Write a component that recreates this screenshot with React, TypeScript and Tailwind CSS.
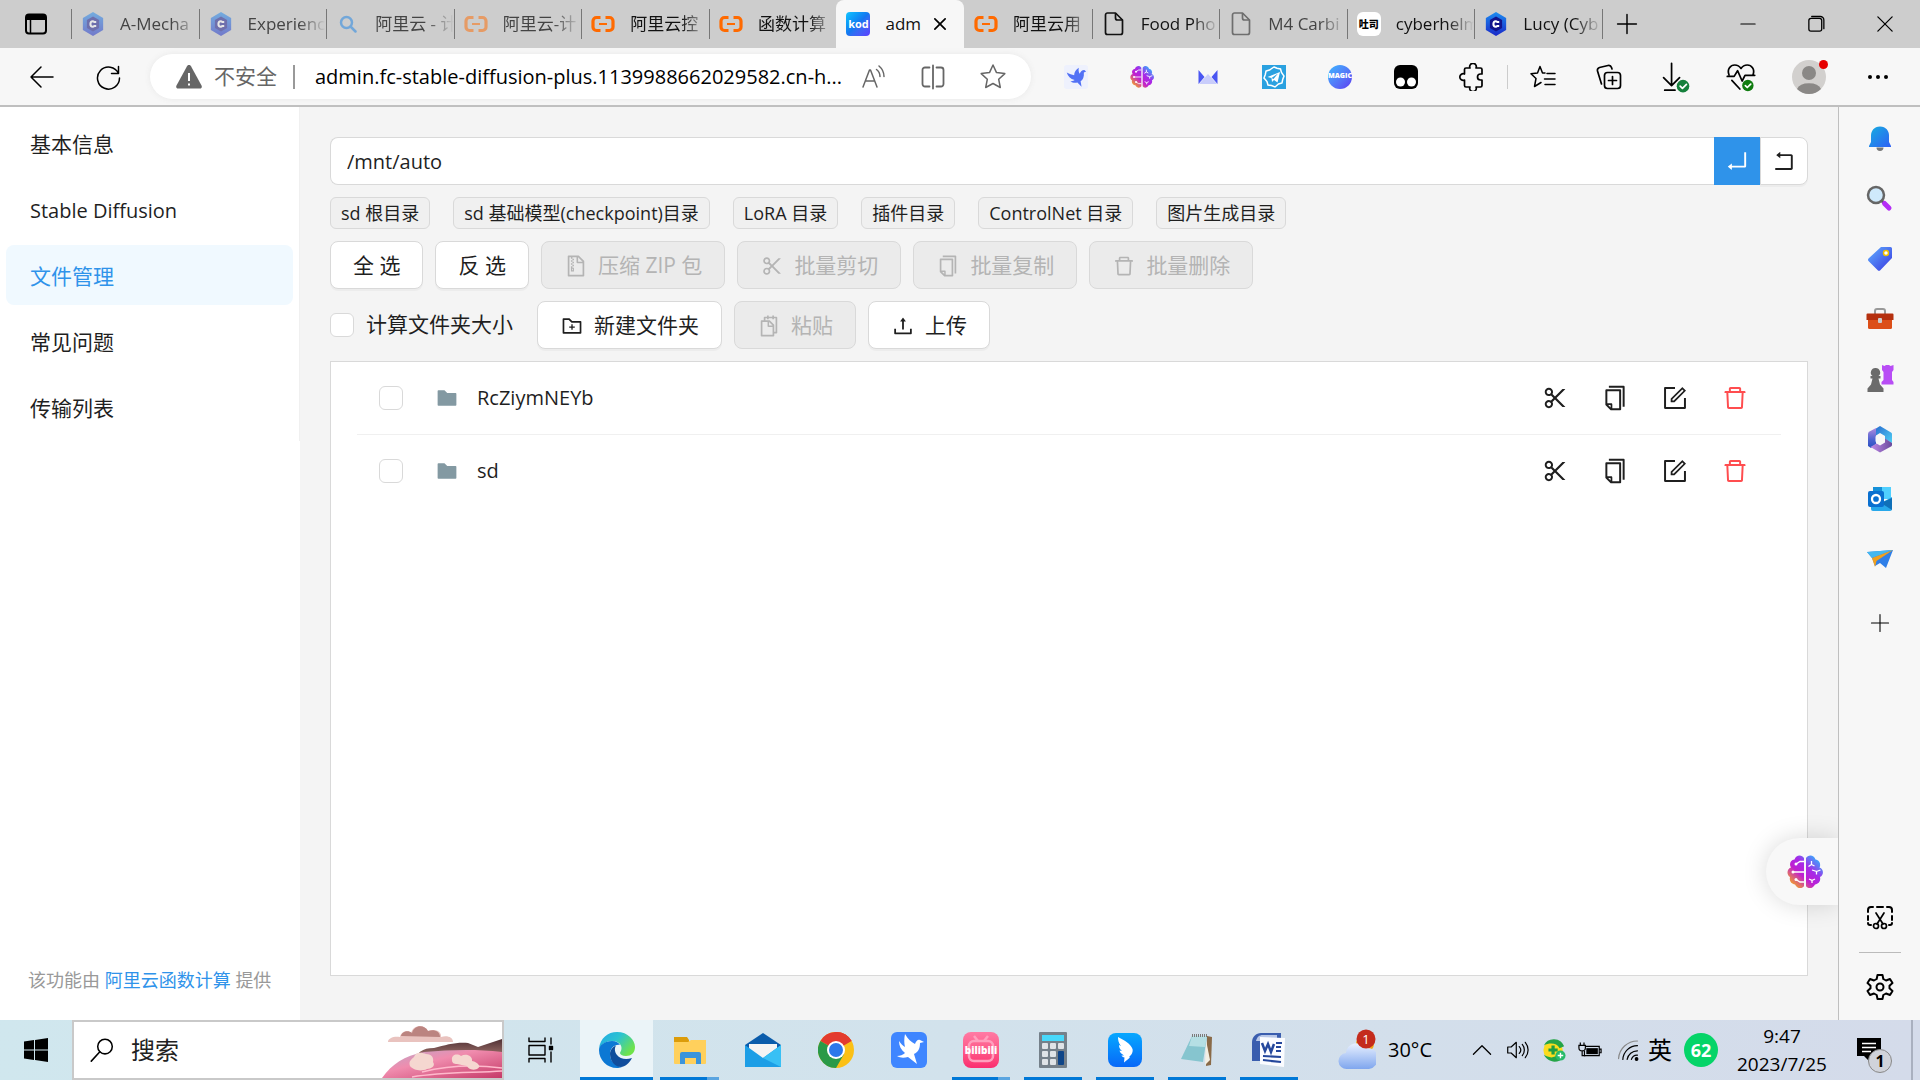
import { useState } from 'react'
import type { ReactNode } from 'react'
import {
  AiFillFolder,
  AiOutlineCopy,
  AiOutlineDelete,
  AiOutlineEnter,
  AiOutlineFileZip,
  AiOutlineFolderAdd,
  AiOutlineForm,
  AiOutlineRollback,
  AiOutlineScissor,
  AiOutlineSnippets,
  AiOutlineUpload,
} from 'react-icons/ai'

type IconProps = { className?: string }

/* ---------- tab icons ---------- */

function CivitIcon({ className }: IconProps) {
  return (
    <svg viewBox="0 0 24 26" className={className}>
      <defs>
        <linearGradient id="civit" x1="0" y1="0" x2="0" y2="1">
          <stop offset="0" stopColor="#1c8cf0" />
          <stop offset="1" stopColor="#1a28c8" />
        </linearGradient>
      </defs>
      <path d="M12 0l11 6.4v13.2L12 26 1 19.600V6.400z" fill="url(#civit)" />
      <path d="M12 5l6.600 3.800v8.400L12 21l-6.600-3.800V8.800z" fill="#12148c" />
      <path d="M15.500 10.800h-2.200c-.5-.6-1-.8-1.600-.8-1.600 0-2.500 1.200-2.500 3s.9 3 2.500 3c.7 0 1.200-.3 1.600-.9h2.200" fill="none" stroke="#fff" strokeWidth="2.200" />
    </svg>
  )
}

function AliyunIcon({ className }: IconProps) {
  return (
    <svg viewBox="0 0 24 24" className={className} fill="none" stroke="#ff6a00" strokeWidth="3.200">
      <path d="M9.500 5.500H5.500a3.500 3.500 0 0 0-3.500 3.500v6a3.500 3.500 0 0 0 3.500 3.500h4M14.500 5.500h4A3.500 3.500 0 0 1 22 9v6a3.500 3.500 0 0 1-3.500 3.500h-4" />
      <path d="M8 12h8" strokeWidth="2" />
    </svg>
  )
}

function SearchTabIcon({ className }: IconProps) {
  return (
    <svg viewBox="0 0 24 24" className={className} fill="none" stroke="#1a82e6" strokeWidth="2.500" strokeLinecap="round">
      <circle cx="10.500" cy="10.500" r="5.500" />
      <path d="M15 15l4.500 4.500" />
    </svg>
  )
}

function PageIcon({ className }: IconProps) {
  return (
    <svg viewBox="0 0 24 24" className={className} fill="none" stroke="#111" strokeWidth="1.700" strokeLinejoin="round">
      <path d="M5.500 1h8L20.500 8v12.500a2 2 0 0 1-2 2h-13a2 2 0 0 1-2-2V3a2 2 0 0 1 2-2z" />
      <path d="M13.500 1v5a2 2 0 0 0 2 2h5" />
    </svg>
  )
}

function KodIcon() {
  return (
    <span className="flex size-6 items-center justify-center rounded-sm bg-linear-to-br from-[#18c5ff] via-[#1676f0] to-[#5a3cff] text-[11px] font-bold text-white">
      kod
    </span>
  )
}

function TusiIcon() {
  return (
    <span className="flex size-6 items-center justify-center rounded-md bg-white text-[10px] font-black text-black">
      吐司
    </span>
  )
}

/* ---------- line icons of the browser frame ---------- */

function Line({ className = 'size-7', width = '1.5', children }: { className?: string; width?: string; children: ReactNode }) {
  return (
    <svg viewBox="0 0 28 28" className={className} fill="none" stroke="currentColor" strokeWidth={width} strokeLinecap="round" strokeLinejoin="round">
      {children}
    </svg>
  )
}

const WorkspaceIcon = () => (
  <Line width="2">
    <rect x="4" y="4.500" width="20" height="19" rx="3" />
    <path d="M4 7.500h20" strokeWidth="5" strokeLinecap="butt" />
    <path d="M8.500 9v14" strokeWidth="1.500" />
  </Line>
)
const BackIcon = () => (
  <Line>
    <path d="M13 4L3 14l10 10M3 14h22" />
  </Line>
)
const RefreshIcon = () => (
  <Line>
    <path d="M24.500 10.500A11 11 0 1 0 25.500 15M24.500 3.500v7h-7" />
  </Line>
)
const ReadAloudIcon = () => (
  <Line>
    <path d="M4 24l6.500-17h1L18 24M6.500 18h9M17.500 6.500a9 9 0 0 1 3.500 7M20 3a14 14 0 0 1 5 10.500" />
  </Line>
)
const SplitIcon = () => (
  <Line width="1.800">
    <path d="M10.500 4.500H6A2.500 2.500 0 0 0 3.500 7v14A2.500 2.500 0 0 0 6 23.500h4.500M17.500 4.500H22A2.500 2.500 0 0 1 24.500 7v14a2.500 2.500 0 0 1-2.500 2.500h-4.500M14 2.500v23" />
  </Line>
)
const StarIcon = () => (
  <Line>
    <path d="M14 2l3.500 7.600 8.300 1-6.100 5.700 1.600 8.200L14 20.500l-7.300 4 1.600-8.200-6.100-5.700 8.300-1z" />
  </Line>
)
const PuzzleIcon = () => (
  <Line width="1.700">
    <path d="M8 5h4a3.300 3.300 0 1 1 6 0h4.500A1.500 1.500 0 0 1 24 6.500V11h-1.500a3 3 0 1 0 0 6H24v5.500a1.500 1.500 0 0 1-1.500 1.500H18a3.300 3.300 0 1 1-6 0H8a1.500 1.500 0 0 1-1.500-1.500V17a3.300 3.300 0 1 1 0-6V6.500A1.500 1.500 0 0 1 8 5z" />
  </Line>
)
const FavoritesIcon = () => (
  <Line>
    <path d="M16 10h-2.500L11 3.500 8.500 10l-6.500.8 5 4.700L5.500 23.500 12 19.500M18 10.500h8M15.500 16H26M16 21.500h10" />
  </Line>
)
const CollectionsIcon = () => (
  <Line width="1.700">
    <rect x="9.500" y="9.500" width="16" height="16" rx="3" />
    <path d="M17.500 13.500v8M13.500 17.500h8M6.500 21L2.500 8a3 3 0 0 1 2-3.500L13 2.500a3 3 0 0 1 3.500 2l.5 1.500" />
  </Line>
)
const DownloadIcon = () => (
  <Line className="size-8">
    <path d="M11 2v19M4 14.500l7 7 7-7M5 25.500h9" />
    <circle cx="21" cy="22" r="5.500" fill="#15803c" stroke="none" />
    <path d="M18.500 22l2 2 3.500-3.500" stroke="#fff" />
  </Line>
)
const HeartIcon = () => (
  <Line className="size-8">
    <path d="M3.500 12C1.500 7 5 3.500 8.500 3.500c2.500 0 4.500 1.500 5.500 3 1-1.500 3-3 5.500-3C23 3.500 26.500 7 24.500 12M2 13.500h6l3-5 4 9 2.500-5H26M6 17l7 7.500" />
    <circle cx="20" cy="21.500" r="5" fill="#107c10" stroke="none" />
    <path d="M17.800 21.500l1.700 1.700 3-3" stroke="#fff" />
  </Line>
)
const PlusIcon = () => (
  <Line className="size-6" width="1.700">
    <path d="M14 3v22M3 14h22" />
  </Line>
)

/* ---------- extension icons ---------- */

const BirdExtension = () => (
  <svg viewBox="0 0 26 26" className="size-6">
    <rect width="26" height="26" rx="3" fill="#eef1fd" />
    <path d="M3 8c3 1.500 5.500 2.500 8 3 0-3 2-6 5-8-.5 3 0 5 1 6.500C18 7 19.500 5.500 22 5.500L24 7l-2.500 1c.5 5-1 8-3.500 9.500l1 6-4.500-4.500c-3 .8-5.500.2-7.500-1.500 2 .2 3.500-.2 4.500-1.200C7 15 4 12 3 8z" fill="#5271f5" />
  </svg>
)

function BrainIcon({ className }: IconProps) {
  return (
    <svg viewBox="0 0 36 34" className={className}>
      <defs>
        <linearGradient id="brain" x1="0" y1="1" x2="1" y2="0">
          <stop offset=".1" stopColor="#f5a623" />
          <stop offset=".4" stopColor="#c01fd0" />
          <stop offset=".6" stopColor="#a62be8" />
          <stop offset=".9" stopColor="#2fb4ff" />
        </linearGradient>
      </defs>
      <path
        d="M17 3c-2-3.500-8-3.500-9.500 1.500C3 5 2 10 4 12.500-.5 14-.5 20 3 22c-1 4 1.500 7 5 7.500C10 34 15.500 34 17 31zM19 3c2-3.500 8-3.500 9.500 1.500C33 5 34 10 32.500 12.500c4.500 1.500 4.500 7.500.5 9.500 1 4-1.500 7-5 7.500C26 34 20.500 34 19 31z"
        fill="url(#brain)"
      />
      <g fill="none" stroke="#fff" strokeWidth="1.300">
        <path d="M17 6.500h-4L9 9M17 17H6M17 27h-4l-4-2.500M24.500 6v3.500l-3 2M24.500 9.500l3 1.500M25 15l4.500 1.500v3M29.500 16.500l4-1.500M22 24l3 1.500V28M25 25.500l3-1.500" />
      </g>
      <g fill="#fff">
        <circle cx="9" cy="9" r="1.500" />
        <circle cx="6" cy="17" r="1.500" />
        <circle cx="9" cy="24.500" r="1.500" />
      </g>
    </svg>
  )
}

const BowExtension = () => (
  <svg viewBox="0 0 24 24" className="size-6">
    <path d="M12 9l9 10H3z" fill="#c9cdfb" />
    <path d="M2.500 5l6 7-6 7zM21.500 5l-6 7 6 7z" fill="#4a56f2" />
  </svg>
)

const TelegramExtension = () => (
  <svg viewBox="0 0 24 24" className="size-6">
    <rect width="24" height="24" fill="#2aa1e0" />
    <path d="M12 2l3 1.300 3.500.7 1 3.500L22 11l-1.300 3.500-.7 3.500-3.500 1L13 22l-3.500-1.500L6 20l-1-3.500L2 13l1.300-3.500L4 6l3.500-1z" fill="none" stroke="#fff" strokeWidth="1.500" />
    <path d="M5.500 12L18 7l-2.500 10.500-3.500-2.500-2 2-.5-4z" fill="#fff" />
    <path d="M9.500 13L16 8.500 11.500 14z" fill="#2aa1e0" />
  </svg>
)

const MagicExtension = () => (
  <span className="flex size-6 items-center justify-center rounded-full bg-linear-to-br from-[#37b6ff] to-[#5b35f0] text-[7px] font-black text-white">
    MAGIC
  </span>
)

const MonkeyExtension = () => (
  <svg viewBox="0 0 24 24" className="size-6">
    <rect width="24" height="24" rx="6" fill="#000" />
    <circle cx="6.500" cy="17" r="4.500" fill="#fff" />
    <circle cx="17.500" cy="17" r="4.500" fill="#fff" />
  </svg>
)

/* ---------- side bar of the browser ---------- */

const BellIcon = () => (
  <svg viewBox="0 0 28 28" className="size-7">
    <defs>
      <linearGradient id="bell" x1="0" y1="0" x2="1" y2="1">
        <stop offset="0" stopColor="#16aee0" />
        <stop offset="1" stopColor="#2f60f5" />
      </linearGradient>
    </defs>
    <path d="M10.500 22.500h7a3.500 3.500 0 0 1-7 0z" fill="#777" />
    <path d="M14 1.500c6 0 9 4.500 9 9V17l2 4v1H3v-1l2-4v-6.500c0-4.500 3-9 9-9z" fill="url(#bell)" />
  </svg>
)
const MagnifierIcon = () => (
  <svg viewBox="0 0 28 28" className="size-7">
    <path d="M15 15l4 4" stroke="#555" strokeWidth="3" />
    <path d="M18.500 18.500l4.500 4.500" stroke="#b52df5" strokeWidth="5" strokeLinecap="round" />
    <circle cx="10" cy="10" r="8" fill="#cfe9fb" stroke="#666" strokeWidth="2.500" />
  </svg>
)
const TagIcon = () => (
  <svg viewBox="0 0 28 28" className="size-7">
    <defs>
      <linearGradient id="tag" x1="0" y1="0" x2="1" y2="1">
        <stop offset="0" stopColor="#5fb0ff" />
        <stop offset="1" stopColor="#3a36e0" />
      </linearGradient>
    </defs>
    <path d="M15 2h9.500A1.500 1.500 0 0 1 26 3.500V13L14.500 25a2 2 0 0 1-3 0L2.500 16a2 2 0 0 1 0-2.500z" fill="url(#tag)" />
    <circle cx="20" cy="8" r="2.500" fill="#fff" stroke="#f0c000" strokeWidth="1.500" />
  </svg>
)
const ToolboxIcon = () => (
  <svg viewBox="0 0 28 28" className="size-7">
    <path d="M9 9V6a2 2 0 0 1 2-2h6a2 2 0 0 1 2 2v3" fill="none" stroke="#999" strokeWidth="2" />
    <path d="M2 12h24v10.500a1.500 1.500 0 0 1-1.500 1.500h-21A1.500 1.500 0 0 1 2 22.500z" fill="#dc4f18" />
    <path d="M1.500 8.500h25a1 1 0 0 1 1 1V15H.5V9.500a1 1 0 0 1 1-1z" fill="#b5300f" />
    <rect x="12" y="13" width="4" height="5" rx="1" fill="#ccc" />
  </svg>
)
const ChessIcon = () => (
  <svg viewBox="0 0 28 28" className="size-7">
    <path d="M16 0l2.500 1L20 0h3l1.500 1L27.500 0v5L26 7v8l1.500 2v2.500H15.500V17l2-2V7L16 5z" fill="#b84df5" />
    <path d="M9.500 3a4.500 4.500 0 0 1 3 8h2v2.500h-2L14 19.500l3.500 4V27h-16v-3.500l3.500-4 1.500-6h-2V11h2a4.500 4.500 0 0 1 3-8z" fill="#6b6b6b" />
  </svg>
)
const M365Icon = () => (
  <svg viewBox="0 0 28 28" className="size-7">
    <defs>
      <linearGradient id="m365-left" x1="0" y1="0" x2="0" y2="1">
        <stop offset="0" stopColor="#b08ade" />
        <stop offset=".6" stopColor="#4a62d0" />
        <stop offset="1" stopColor="#2b4fc0" />
      </linearGradient>
      <linearGradient id="m365-top" x1="0" y1="0" x2="1" y2="1">
        <stop offset="0" stopColor="#2a6ed0" />
        <stop offset="1" stopColor="#4fd0f5" />
      </linearGradient>
      <linearGradient id="m365-bottom" x1="0" y1="0" x2="1" y2="0">
        <stop offset="0" stopColor="#c08ae8" />
        <stop offset="1" stopColor="#6a4a9c" />
      </linearGradient>
    </defs>
    <path d="M10 3.500L14 1l11 6.500a2 2 0 0 1 1 2V18l-7-4v-3l-5-3-4 2.500z" fill="url(#m365-top)" />
    <path d="M10 3v16l-5 4-3-2V9a3 3 0 0 1 1.500-2.500z" fill="url(#m365-left)" />
    <path d="M19 13.500l7 4.500v2a2 2 0 0 1-1 1.500L14 27.500 4.500 22l6-3.500 3.500 2 5-3z" fill="url(#m365-bottom)" />
    <path d="M14 9l4.500 2.500v5L14 19l-4.500-2.500v-5z" fill="#f7f7f7" />
  </svg>
)
const OutlookIcon = () => (
  <svg viewBox="0 0 28 28" className="size-7">
    <path d="M7 2h18v12H7z" fill="#50d0ff" />
    <path d="M7 2h9v10H7z" fill="#1590d8" />
    <path d="M5 13l10 5 11-6v12a2 2 0 0 1-2 2H7a2 2 0 0 1-2-2z" fill="#28a8ea" />
    <path d="M26 13v12L15 18z" fill="#1070b8" />
    <rect x="2" y="6" width="16" height="16" rx="2" fill="#0a70d0" />
    <circle cx="10" cy="14" r="4" fill="none" stroke="#fff" strokeWidth="2.300" />
  </svg>
)
const PlaneIcon = () => (
  <svg viewBox="0 0 28 28" className="size-7">
    <path d="M1 7l26-2-7 18-6-5-5 3-3-8z" fill="#2f7fe8" />
    <path d="M1 7l26-2L6 13z" fill="#44b8f0" />
    <path d="M27 5L6 13l3 9 1.500-6z" fill="#f0a020" />
  </svg>
)
const SnipIcon = () => (
  <Line className="size-7" width="2">
    <path d="M2 8V6a3 3 0 0 1 3-3h2M11 3h6M21 3h2a3 3 0 0 1 3 3v2M26 12v4M2 12v4M2 19a2 2 0 0 0 2 2h1M26 19a2 2 0 0 1-2 2h-1" />
    <path d="M10 9l7 11M18 9l-7 11" strokeWidth="1.700" />
    <circle cx="10" cy="22" r="2.500" strokeWidth="1.700" />
    <circle cx="18" cy="22" r="2.500" strokeWidth="1.700" />
  </Line>
)
const GearIcon = () => (
  <Line className="size-7" width="2">
    <path d="M11.500 2h5l.8 4 2.700 1.500 4-1.500L26.500 10l-3 2.700v2.600l3 2.700L24 22l-4-1.500-2.700 1.500-.8 4h-5l-.8-4L8 20.500 4 22 1.500 18l3-2.700v-2.600l-3-2.700L4 6l4 1.500L10.700 6z" />
    <circle cx="14" cy="14" r="3.500" />
  </Line>
)

/* ---------- task bar icons ---------- */

const EdgeIcon = () => (
  <svg viewBox="0 0 36 36" className="size-9">
    <defs>
      <linearGradient id="edge-top" x1="0" y1="0" x2="1" y2=".6">
        <stop offset="0" stopColor="#1fa8e8" />
        <stop offset=".5" stopColor="#2cc3d0" />
        <stop offset="1" stopColor="#6fe34a" />
      </linearGradient>
    </defs>
    <path d="M0 17C1 6 9 0 18 0c11 0 18 8 18 15 0 6-4 9-9 9-4 0-6-1.500-6-3 0-1 1.500-2 1.500-5 0-4-4-7-9-7C7 9 2 12 0 17z" fill="url(#edge-top)" />
    <path d="M0 18c0-5 6-9 13-9 4 0 7 2 8 4-5-1-10 3-10 9 0 7 5 12 12 13-2 .7-3.500 1-5 1C8 36 0 28 0 18z" fill="#0c78d4" />
    <path d="M11 22c0-4 3-7.500 6-8.500-2 3-1 7 1 9.500 3 4 9 5 15 3-3 6-7 8.500-11 9-6 0-11-6-11-13z" fill="#0f4d9c" />
  </svg>
)
const ExplorerIcon = () => (
  <svg viewBox="0 0 32 32" className="size-8">
    <path d="M0 3h13l2 3v5H0z" fill="#dc9c0a" />
    <path d="M0 8h14l3-2h15v23a1 1 0 0 1-1 1H1a1 1 0 0 1-1-1z" fill="#ffd05c" />
    <path d="M6 30V20a2 2 0 0 1 2-2h17a2 2 0 0 1 2 2v10h-5v-6H11v6z" fill="#3a94dc" />
  </svg>
)
const MailIcon = () => (
  <svg viewBox="0 0 36 36" className="size-9">
    <path d="M18 1l18 12v3H0v-3z" fill="#0a5cab" />
    <path d="M4 12h28v10l-14 8L4 22z" fill="#f4f4f4" />
    <path d="M0 13l18 13 18-13v22H0z" fill="#1c9ee6" />
    <path d="M18 26l18-13v22z" fill="#38c0f5" />
  </svg>
)
const ChromeIcon = () => (
  <svg viewBox="0 0 36 36" className="size-9">
    <circle cx="18" cy="18" r="18" fill="#fbc016" />
    <path d="M18 18L2.400 9A18 18 0 0 1 33.600 9z" fill="#e33b2e" />
    <path d="M18 0a18 18 0 0 1 15.600 9H18z" fill="#e33b2e" />
    <path d="M2.400 9A18 18 0 0 0 18 36l7.800-13.500L18 18z" fill="#2a9a48" />
    <circle cx="18" cy="18" r="9" fill="#fff" />
    <circle cx="18" cy="18" r="7" fill="#2b78ea" />
  </svg>
)
const BirdApp = () => (
  <svg viewBox="0 0 36 36" className="size-9">
    <rect width="36" height="36" rx="6" fill="#3f86ff" />
    <path d="M8 9c2 3 4 5 6 6-1-4-1-8 0-13 3 5 6 8 10 10 1-3 3-5 5-4l4 2-4 1c0 6-2 9-6 11l3 10-9-7c-4 1-8 1-11-1 3 0 6-1 8-3-4-3-6-7-6-12z" fill="#fff" />
  </svg>
)
const BiliIcon = () => (
  <span className="relative flex size-9 items-center justify-center rounded-lg bg-linear-to-b from-[#ff7aa4] to-[#fb2c70]">
    <svg viewBox="0 0 36 36" className="absolute inset-0" fill="none" stroke="#ff9fbd" strokeWidth="2.500">
      <rect x="6" y="9" width="24" height="20" rx="5" />
      <path d="M11 4l4 5M25 4l-4 5" />
    </svg>
    <span className="relative text-[10px] font-black text-white">bilibili</span>
  </span>
)
const CalcIcon = () => (
  <svg viewBox="0 0 28 36" className="h-9 w-7">
    <rect width="28" height="36" rx="1" fill="#75808a" />
    <rect x="3" y="3" width="22" height="6" fill="#48d8fa" />
    <g fill="#dfe3e7">
      <rect x="3" y="11" width="6" height="6" rx="1" />
      <rect x="11" y="11" width="6" height="6" rx="1" />
      <rect x="19" y="11" width="6" height="6" rx="1" />
      <rect x="3" y="19" width="6" height="6" rx="1" />
      <rect x="11" y="19" width="6" height="6" rx="1" />
      <rect x="3" y="27" width="6" height="6" rx="1" />
      <rect x="11" y="27" width="6" height="6" rx="1" />
    </g>
    <rect x="19" y="19" width="6" height="14" rx="1" fill="#0f4588" />
  </svg>
)
const DingIcon = () => (
  <svg viewBox="0 0 34 34" className="size-[34px]">
    <defs>
      <linearGradient id="ding" x1="0" y1="0" x2="0" y2="1">
        <stop offset="0" stopColor="#06a8ff" />
        <stop offset="1" stopColor="#0768f8" />
      </linearGradient>
    </defs>
    <rect width="34" height="34" rx="8" fill="url(#ding)" />
    <path d="M10 4c6 3 13 7 14.500 12 .8 3-1 6-3.500 8l1 .5-6 5 .5-5c-1.500-.3-2.500-1-3-2h2.500c-2.500-1.500-4-3-4.500-5l2.500.5C11.500 16 11 14 11 12l2 1C10.500 10 10 7 10 4z" fill="#fff" />
  </svg>
)
const NotepadIcon = () => (
  <svg viewBox="0 0 36 36" className="size-9">
    <path d="M28 4l5 1-1 28-5 1z" fill="#8a6a48" />
    <path d="M27 8l4 20-5 5z" fill="#f3efe4" />
    <path d="M13 4h15l-4 26L2 27z" fill="#86c5cf" />
    <path d="M13 4h15l-2 11-16-1z" fill="#b5dfe4" />
    <path d="M13 3.500h16" stroke="#7a7a7a" strokeWidth="3" strokeDasharray="1 1" />
  </svg>
)
const WordIcon = () => (
  <svg viewBox="0 0 36 36" className="size-9">
    <path d="M10 1h20v28H1V10c0-5 4-9 9-9z" fill="#3a5dae" />
    <path d="M12 3h14v6H5c1-4 3-6 7-6z" fill="#b9c8e8" />
    <path d="M9 5l25 1-1 29-24-3z" fill="#fbfcff" />
    <path d="M11 11l3 8 3-7 3 8 3-8" fill="none" stroke="#24479c" strokeWidth="2.500" />
    <path d="M25 11h6M25 15h5M25 19h5M12 24l18 1M12 28l18 2" stroke="#24479c" strokeWidth="2.200" />
  </svg>
)

function SearchArt() {
  return (
    <svg viewBox="0 0 120 56" className="h-14 w-[120px]">
      <defs>
        <linearGradient id="hill" x1="0" y1="0" x2="1" y2="1">
          <stop offset="0" stopColor="#b7a9c9" />
          <stop offset=".4" stopColor="#f08cae" />
          <stop offset="1" stopColor="#c63a68" />
        </linearGradient>
        <linearGradient id="rock" x1="0" y1="0" x2="0" y2="1">
          <stop offset="0" stopColor="#4f3034" />
          <stop offset="1" stopColor="#d9a294" />
        </linearGradient>
      </defs>
      <path d="M6 20c0-4 6-6 12-5 1-6 8-7 11-4 2-8 13-10 17-2 8-3 14 1 13 6 6-2 12 0 12 5z" fill="#e9c3bf" />
      <path d="M19 14c1-5 8-6 11-3 2-8 12-9 16-2 7-2 12 1 12 6z" fill="#bb8480" />
      <path d="M28 42c8-12 12-16 24-16 12-3 22-6 34-5l10 4 24-8v30H28z" fill="url(#rock)" />
      <path d="M0 56c10-14 22-22 42-26 26-2 50-3 78 0v26z" fill="url(#hill)" />
      <path d="M40 50c24-6 48-8 80-4M30 55c30-5 60-4 90-6" fill="none" stroke="#ffb9cc" strokeWidth="1.500" />
      <path d="M28 44c-2-5 2-7 4-9 2-6 9-4 12-3 6 0 8 4 7 8 3 4-2 7-6 7-6 3-14 1-17-3z" fill="#f5d7d0" />
      <path d="M70 38c-1-5 5-7 9-4 5-3 12 0 11 5 6 1 10 6 5 8-6 2-9-1-10-3-4-1-7-1-10-2-3 0-5-1-5-4z" fill="#f5d7d0" />
    </svg>
  )
}

/* ---------- data ---------- */

const TABS: { title: string; icon: ReactNode; asleep?: boolean; active?: boolean }[] = [
  { title: 'A-Mecha', icon: <CivitIcon className="size-6" />, asleep: true },
  { title: 'Experienc', icon: <CivitIcon className="size-6" />, asleep: true },
  { title: '阿里云 - 计', icon: <SearchTabIcon className="size-6" />, asleep: true },
  { title: '阿里云-计', icon: <AliyunIcon className="size-6" />, asleep: true },
  { title: '阿里云控', icon: <AliyunIcon className="size-6" /> },
  { title: '函数计算', icon: <AliyunIcon className="size-6" /> },
  { title: 'adm', icon: <KodIcon />, active: true },
  { title: '阿里云用', icon: <AliyunIcon className="size-6" /> },
  { title: 'Food Pho', icon: <PageIcon className="size-6" /> },
  { title: 'M4 Carbi', icon: <PageIcon className="size-6" />, asleep: true },
  { title: 'cyberhelm', icon: <TusiIcon /> },
  { title: 'Lucy (Cyb', icon: <CivitIcon className="size-6" /> },
]

const EXTENSIONS: { label: string; icon: ReactNode }[] = [
  { label: '迅雷', icon: <BirdExtension /> },
  { label: '智能助手', icon: <BrainIcon className="size-6" /> },
  { label: '翻译', icon: <BowExtension /> },
  { label: 'Telegram', icon: <TelegramExtension /> },
  { label: 'Magic', icon: <MagicExtension /> },
  { label: '脚本', icon: <MonkeyExtension /> },
  { label: '扩展', icon: <PuzzleIcon /> },
]

const BROWSER_TOOLS: { label: string; icon: ReactNode }[] = [
  { label: '收藏夹', icon: <FavoritesIcon /> },
  { label: '集锦', icon: <CollectionsIcon /> },
  { label: '下载', icon: <DownloadIcon /> },
  { label: '性能', icon: <HeartIcon /> },
]

const SIDE_APPS: { label: string; icon: ReactNode }[] = [
  { label: '通知', icon: <BellIcon /> },
  { label: '搜索', icon: <MagnifierIcon /> },
  { label: '购物', icon: <TagIcon /> },
  { label: '工具', icon: <ToolboxIcon /> },
  { label: '游戏', icon: <ChessIcon /> },
  { label: 'Microsoft 365', icon: <M365Icon /> },
  { label: 'Outlook', icon: <OutlookIcon /> },
  { label: 'Drop', icon: <PlaneIcon /> },
]

const MENU: { name: string; latin?: boolean }[] = [
  { name: '基本信息' },
  { name: 'Stable Diffusion', latin: true },
  { name: '文件管理' },
  { name: '常见问题' },
  { name: '传输列表' },
]

const SHORTCUTS = ['sd 根目录', 'sd 基础模型(checkpoint)目录', 'LoRA 目录', '插件目录', 'ControlNet 目录', '图片生成目录']

const FILES = ['RcZiymNEYb', 'sd']

type TaskState = 'active' | 'open' | 'many'

const PINNED: { label: string; icon: ReactNode; state?: TaskState }[] = [
  { label: 'Edge', icon: <EdgeIcon />, state: 'active' },
  { label: '文件资源管理器', icon: <ExplorerIcon />, state: 'many' },
  { label: '邮件', icon: <MailIcon /> },
  { label: 'Chrome', icon: <ChromeIcon /> },
  { label: '迅雷', icon: <BirdApp /> },
]

const RUNNING: { label: string; icon: ReactNode; state?: TaskState }[] = [
  { label: '哔哩哔哩', icon: <BiliIcon />, state: 'many' },
  { label: '计算器', icon: <CalcIcon />, state: 'open' },
  { label: '钉钉', icon: <DingIcon />, state: 'open' },
  { label: '记事本', icon: <NotepadIcon />, state: 'open' },
  { label: 'Word', icon: <WordIcon />, state: 'open' },
]

/* ---------- browser frame ---------- */

function TabStrip() {
  return (
    <div className="flex h-12 items-center bg-[#cdcdcd]">
      <button aria-label="工作区" className="flex w-[71px] shrink-0 justify-center">
        <WorkspaceIcon />
      </button>
      <div className="flex h-full max-w-[1531px] flex-1 text-[17px]">
        {TABS.map((tab, i) => (
          <div
            key={i}
            className={`flex h-full min-w-0 flex-1 items-center pl-[10px] ${
              tab.active ? 'rounded-t-lg bg-[#f7f7f7]' : 'relative before:absolute before:left-0 before:h-[30px] before:w-px before:bg-[#777]'
            } ${TABS[i - 1]?.active ? 'before:hidden' : ''}`}
          >
            <span className={`shrink-0 ${tab.asleep ? 'opacity-50' : ''}`}>{tab.icon}</span>
            <span
              className={`ml-[15px] min-w-0 flex-1 overflow-hidden whitespace-nowrap ${
                tab.active ? '' : '[mask-image:linear-gradient(to_right,black_65%,transparent)]'
              } ${tab.asleep ? 'text-[#444]' : 'text-[#111]'}`}
            >
              {tab.title}
            </span>
            {tab.active && (
              <button aria-label="关闭标签页" className="mr-3">
                <Line className="size-6" width="2">
                  <path d="M8 8l12 12M20 8L8 20" />
                </Line>
              </button>
            )}
          </div>
        ))}
      </div>
      <span className="h-[30px] w-px shrink-0 bg-[#777]" />
      <button aria-label="新建标签页" className="ml-2 flex w-8 justify-center">
        <PlusIcon />
      </button>
      <div className="ml-auto flex h-full shrink-0 items-center">
        <button aria-label="最小化" className="flex w-[68px] justify-center">
          <Line className="size-5">
            <path d="M4 14h20" />
          </Line>
        </button>
        <button aria-label="还原" className="flex w-[68px] justify-center">
          <Line className="size-5" width="1.8">
            <rect x="4" y="6" width="18" height="18" rx="3" />
            <path d="M8 3.500h12a5 5 0 0 1 5 5v12" />
          </Line>
        </button>
        <button aria-label="关闭" className="flex w-[70px] justify-center">
          <Line className="size-5" width="1.8">
            <path d="M4 4l20 20M24 4L4 24" />
          </Line>
        </button>
      </div>
    </div>
  )
}

function Toolbar() {
  return (
    <div className="flex h-[59px] items-center border-b-2 border-[#bfbfbf] bg-[#f7f7f7]">
      <button aria-label="返回" className="ml-7 flex w-7 justify-center">
        <BackIcon />
      </button>
      <button aria-label="刷新" className="mr-7 ml-[38px] flex w-7 justify-center">
        <RefreshIcon />
      </button>
      <div className="flex h-[45px] w-[881px] shrink items-center rounded-full bg-white pr-6 pl-[26px] shadow-[0_0_6px_#e8e8e8]">
        <svg viewBox="0 0 26 24" className="mr-3 h-6 w-[26px] shrink-0">
          <path d="M13 0c1 0 1.500.5 2 1.300l10.500 19.200c.8 1.500 0 3-1.500 3H2c-1.500 0-2.300-1.500-1.500-3L11 1.300C11.500.5 12 0 13 0z" fill="#666" />
          <path d="M13 8v8M13 18.500v2" stroke="#fff" strokeWidth="2" />
        </svg>
        <span className="shrink-0 text-[21px] text-[#666]">不安全</span>
        <span className="mr-5 ml-4 h-6 w-0.5 shrink-0 bg-[#999]" />
        <input
          aria-label="地址"
          readOnly
          className="min-w-0 flex-1 text-[20px] text-ellipsis outline-none"
          value="admin.fc-stable-diffusion-plus.1139988662029582.cn-h..."
        />
        <div className="ml-2 flex shrink-0 gap-8 text-[#666]">
          <button aria-label="朗读">
            <ReadAloudIcon />
          </button>
          <button aria-label="分屏">
            <SplitIcon />
          </button>
          <button aria-label="收藏">
            <StarIcon />
          </button>
        </div>
      </div>
      <div className="ml-auto flex items-center">
        {EXTENSIONS.map((item) => (
          <button key={item.label} aria-label={item.label} className="flex w-[66px] justify-center">
            {item.icon}
          </button>
        ))}
        <span className="mx-0.5 h-6 w-px bg-[#ccc]" />
        {BROWSER_TOOLS.map((item) => (
          <button key={item.label} aria-label={item.label} className="flex w-[66px] justify-center">
            {item.icon}
          </button>
        ))}
        <button aria-label="个人资料" className="relative mr-[38px] ml-[18px]">
          <svg viewBox="0 0 34 34" className="size-[34px]">
            <circle cx="17" cy="17" r="17" fill="#d2d0ce" />
            <circle cx="17" cy="13" r="7" fill="#8a8886" />
            <path d="M5 29a12.500 8 0 0 1 24 0 17 17 0 0 1-24 0z" fill="#8a8886" />
          </svg>
          <span className="absolute top-0 -right-0.5 size-[9px] rounded-full bg-[#e60000]" />
        </button>
        <button aria-label="设置及其他" className="mr-7 flex w-7 justify-center gap-1">
          <i className="size-1 rounded-full bg-black" />
          <i className="size-1 rounded-full bg-black" />
          <i className="size-1 rounded-full bg-black" />
        </button>
      </div>
    </div>
  )
}

function EdgeSidebar() {
  return (
    <aside className="flex w-[82px] shrink-0 flex-col items-center border-l border-[#bfbfbf] bg-[#f7f7f7] pt-[18px] pb-[19px]">
      <div className="flex flex-col gap-8">
        {SIDE_APPS.map((app) => (
          <button key={app.label} aria-label={app.label}>
            {app.icon}
          </button>
        ))}
      </div>
      <button aria-label="添加" className="mt-10">
        <Line className="size-5">
          <path d="M14 2v24M2 14h24" />
        </Line>
      </button>
      <button aria-label="截图" className="mt-auto">
        <SnipIcon />
      </button>
      <hr className="my-5 w-[42px] border-[#bbb]" />
      <button aria-label="设置">
        <GearIcon />
      </button>
    </aside>
  )
}

/* ---------- page ---------- */

function SideMenu({ current, onSelect }: { current: string; onSelect: (name: string) => void }) {
  return (
    <nav className="flex w-[300px] shrink-0 flex-col bg-white">
      <div className="flex flex-col gap-[6px] border-r border-[#f0f0f0] px-[6px] pt-[6px] pb-1">
        {MENU.map(({ name, latin }) => (
          <button
            key={name}
            onClick={() => onSelect(name)}
            className={`h-[60px] rounded-lg px-6 pt-1 text-left ${latin ? 'text-[20px]' : 'text-[21px]'} ${
              current === name ? 'bg-[#f0f9ff] text-[#2f93ea]' : 'text-[#1f1f1f]'
            }`}
          >
            {name}
          </button>
        ))}
      </div>
      <p className="mt-auto pb-[26px] pl-7 text-[18px] text-[#999]">
        该功能由{' '}
        <a href="#" className="text-[#2f93ea]">
          阿里云函数计算
        </a>{' '}
        提供
      </p>
    </nav>
  )
}

function ToolButton({ icon, disabled, children }: { icon?: ReactNode; disabled?: boolean; children: ReactNode }) {
  return (
    <button
      disabled={disabled}
      className={`flex h-12 items-center gap-[10px] rounded-lg border border-[#d9d9d9] px-[22px] pt-0.5 text-[21px] whitespace-nowrap ${
        disabled ? 'bg-[#ebebeb] text-[#b4b4b4]' : 'bg-white text-[#1f1f1f] shadow-[0_2px_0_#00000008]'
      }`}
    >
      {icon}
      {children}
    </button>
  )
}

const CHECKBOX = 'size-6 shrink-0 appearance-none rounded-md border border-[#d9d9d9] bg-white checked:border-[#2f93ea] checked:bg-[#2f93ea]'

function FileRow({ name }: { name: string }) {
  return (
    <li className="mx-[26px] flex h-[73px] items-center border-b border-[#f0f0f0] pr-8 pl-[22px] last:border-transparent">
      <label className="flex items-center">
        <input type="checkbox" aria-label={name} className={CHECKBOX} />
      </label>
      <AiFillFolder className="mr-[18px] ml-8 size-6 text-[#8399a2]" />
      <span className="text-[20px]">{name}</span>
      <div className="ml-auto flex gap-8">
        <button aria-label="剪切">
          <AiOutlineScissor className="size-7" />
        </button>
        <button aria-label="复制">
          <AiOutlineCopy className="size-7" />
        </button>
        <button aria-label="重命名">
          <AiOutlineForm className="size-7" />
        </button>
        <button aria-label="删除" className="text-[#ff4d4f]">
          <AiOutlineDelete className="size-7" />
        </button>
      </div>
    </li>
  )
}

function FileManager() {
  const [path, setPath] = useState('/mnt/auto')

  return (
    <main className="relative flex min-w-0 flex-1 flex-col gap-3 bg-[#f4f4f4] px-[30px] pt-[30px] pb-11 text-[#1f1f1f]">
      <div className="flex h-12">
        <input
          aria-label="路径"
          value={path}
          onChange={(e) => setPath(e.target.value)}
          className="min-w-0 flex-1 rounded-l-lg border border-r-0 border-[#d9d9d9] bg-white px-4 pt-0.5 text-[20px] outline-none"
        />
        <button aria-label="前往" className="flex w-[46px] items-center justify-center bg-[#2f93ea] text-white">
          <AiOutlineEnter className="size-[26px]" />
        </button>
        <button aria-label="返回上级" className="flex w-12 items-center justify-center rounded-r-lg border border-[#d9d9d9] bg-white shadow-[0_2px_0_#00000008]">
          <AiOutlineRollback className="size-[26px]" />
        </button>
      </div>

      <div className="flex gap-[23px]">
        {SHORTCUTS.map((name) => (
          <button key={name} className="h-8 rounded-md border border-[#d9d9d9] bg-[#f0f0f0] px-[10px] text-[18px] whitespace-nowrap">
            {name}
          </button>
        ))}
      </div>

      <div className="flex gap-3">
        <ToolButton>全 选</ToolButton>
        <ToolButton>反 选</ToolButton>
        <ToolButton disabled icon={<AiOutlineFileZip className="size-6" />}>
          压缩 ZIP 包
        </ToolButton>
        <ToolButton disabled icon={<AiOutlineScissor className="size-6" />}>
          批量剪切
        </ToolButton>
        <ToolButton disabled icon={<AiOutlineCopy className="size-6" />}>
          批量复制
        </ToolButton>
        <ToolButton disabled icon={<AiOutlineDelete className="size-6" />}>
          批量删除
        </ToolButton>
      </div>

      <div className="flex gap-3">
        <label className="mr-3 flex items-center gap-3 text-[21px]">
          <input type="checkbox" className={CHECKBOX} />
          计算文件夹大小
        </label>
        <ToolButton icon={<AiOutlineFolderAdd className="size-6" />}>新建文件夹</ToolButton>
        <ToolButton disabled icon={<AiOutlineSnippets className="size-6" />}>
          粘贴
        </ToolButton>
        <ToolButton icon={<AiOutlineUpload className="size-6" />}>上传</ToolButton>
      </div>

      <ul className="flex-1 border border-[#d9d9d9] bg-white">
        {FILES.map((name) => (
          <FileRow key={name} name={name} />
        ))}
      </ul>

      <button
        aria-label="智能助手"
        className="absolute right-0 bottom-[115px] flex h-[67px] w-[72px] items-center rounded-l-full bg-[#f8f8f8] pl-[21px] shadow-[0_0_24px_#00000026] [clip-path:inset(-30px_0_-30px_-30px)]"
      >
        <BrainIcon className="h-[34px] w-9" />
      </button>
    </main>
  )
}

/* ---------- task bar ---------- */

function TaskButton({ label, icon, state }: { label: string; icon: ReactNode; state?: TaskState }) {
  return (
    <button aria-label={label} className={`relative flex size-full items-center justify-center ${state === 'active' ? 'bg-[#ebf4f8]' : ''}`}>
      {icon}
      {state === 'active' && <span className="absolute inset-x-0 bottom-0 h-[3px] bg-[#0078d7]" />}
      {state === 'open' && <span className="absolute inset-x-[7px] bottom-0 h-[3px] bg-[#0078d7]" />}
      {state === 'many' && (
        <span className="absolute inset-x-[7px] bottom-0 flex h-[3px] justify-end bg-[#0078d7]">
          <span className="w-3 bg-[#5ba5e0]" />
        </span>
      )}
    </button>
  )
}

function Tray() {
  return (
    <div className="ml-auto flex h-full items-center">
      <button className="flex items-center gap-3 text-[20px]">
        <svg viewBox="0 0 38 42" className="h-[42px] w-[38px]">
          <defs>
            <linearGradient id="cloud" x1="0" y1="0" x2="0" y2="1">
              <stop offset="0" stopColor="#e9f1ff" />
              <stop offset="1" stopColor="#7fa6ee" />
            </linearGradient>
          </defs>
          <circle cx="27" cy="15" r="9" fill="#f2a516" />
          <path d="M9 40a8 8 0 0 1-1-16 11 11 0 0 1 20-5 10.500 10.500 0 0 1 3 21z" fill="url(#cloud)" />
          <circle cx="28" cy="10" r="9.500" fill="#c42b1c" />
          <text x="28" y="15" textAnchor="middle" fontSize="13" fill="#fff">
            1
          </text>
        </svg>
        30°C
      </button>
      <button aria-label="显示隐藏的图标" className="ml-[38px] flex w-6 justify-center">
        <Line className="size-5" width="1.8">
          <path d="M2 20L14 8l12 12" />
        </Line>
      </button>
      <button aria-label="音量" className="ml-3">
        <Line className="size-6" width="1.4">
          <path d="M2 10.500h4L12 5v18l-6-5.500H2zM15.500 10a6 6 0 0 1 0 8M19 7.500a10 10 0 0 1 0 13M22.500 5a14 14 0 0 1 0 18" />
        </Line>
      </button>
      <button aria-label="360" className="ml-3">
        <svg viewBox="0 0 26 26" className="size-6">
          <circle cx="12" cy="13" r="10.500" fill="#fbdc1e" />
          <path d="M2 8A12 12 0 0 1 24 9l-5 2C16 5 8 5 2 8zM2 18c5 4 12 4 15 0l6 3C18 28 6 27 2 18z" fill="#25a447" />
          <path d="M12 8v10M7 13h10" stroke="#1d9e42" strokeWidth="3.500" />
          <circle cx="20" cy="19" r="5.500" fill="#27ba6a" />
          <path d="M20 16v6M17 19h6" stroke="#fff" strokeWidth="1.500" />
        </svg>
      </button>
      <button aria-label="电源" className="ml-3">
        <svg viewBox="0 0 26 26" className="size-6">
          <path d="M8 9h15v10H7v-5M23 12h2v4h-2" fill="none" stroke="#000" strokeWidth="1.300" />
          <path d="M9 11h12.500v6.500H9z" />
          <path d="M2.500 5v3M6.500 5v3M1 8h7v2.500a3.500 3.500 0 0 1-7 0zM4.500 14v5H8" fill="none" stroke="#000" strokeWidth="1.300" />
        </svg>
      </button>
      <button aria-label="网络" className="ml-[14px]">
        <Line className="size-6" width="1.4">
          <path d="M3 24A22 22 0 0 1 25 3.500" stroke="#888" />
          <path d="M8 25A17 17 0 0 1 25 9M13 25a12 12 0 0 1 12-10M18 25a7 7 0 0 1 7-5" />
          <circle cx="24" cy="24.500" r="1.500" fill="#000" />
        </Line>
      </button>
      <button className="ml-2 text-[24px]">英</button>
      <button className="ml-3 flex size-[34px] items-center justify-center rounded-full bg-[#05d468] text-[18px] font-bold text-white">62</button>
      <button className="ml-3 flex w-[104px] flex-col items-center text-[19px] leading-7">
        <span>9:47</span>
        <span>2023/7/25</span>
      </button>
      <button aria-label="通知" className="relative mr-[29px] ml-[22px]">
        <svg viewBox="0 0 26 26" className="size-[26px]">
          <path d="M1 1h24v18H14v6l-6-6H1z" />
          <path d="M6 6.500h14M6 10.500h14M6 14.500h9" stroke="#fff" strokeWidth="1.300" />
        </svg>
        <span className="absolute top-3 left-3 flex size-6 items-center justify-center rounded-full border border-[#888] bg-[#d0d3da] text-[16px] font-bold">1</span>
      </button>
      <span className="mr-[7px] h-full w-0.5 bg-[#a9b0bf]" />
    </div>
  )
}

function Taskbar() {
  return (
    <footer className="flex h-[60px] items-stretch bg-linear-to-r from-[#d0e7ee] via-[#d2e2ec] to-[#d4dbea]">
      <button aria-label="开始" className="flex w-[72px] shrink-0 items-center justify-center">
        <svg viewBox="0 0 24 24" className="size-6">
          <path d="M0 3.500l10-1.400v9.400H0zM11 2l13-2v11.500H11zM0 12.500h10v9.400l-10-1.400zM11 12.500h13V24l-13-2z" />
        </svg>
      </button>
      <label className="flex w-[432px] shrink items-center border-2 border-[#c9c9c9] bg-white pl-4">
        <Line className="size-6 shrink-0" width="1.8">
          <circle cx="17.500" cy="10" r="8.500" />
          <path d="M11.500 16L1.500 27" />
        </Line>
        <input type="search" placeholder="搜索" aria-label="搜索" className="ml-[17px] min-w-0 flex-1 text-[24px] outline-none placeholder:text-[#222]" />
        <SearchArt />
      </label>
      <button aria-label="任务视图" className="flex w-[76px] shrink-0 items-center justify-center pr-1">
        <Line className="size-7" width="1.4">
          <path d="M3 2v3.500h16V2M3 26v-3.500h16V26M3 9.500h16v9.500H3zM25 2v6M25 16v10" />
          <path d="M23.500 10.500h3v3h-3z" fill="#000" />
        </Line>
      </button>
      {PINNED.map((app) => (
        <div key={app.label} className="w-[73px]">
          <TaskButton {...app} />
        </div>
      ))}
      {RUNNING.map((app) => (
        <div key={app.label} className="w-[72px]">
          <TaskButton {...app} />
        </div>
      ))}
      <Tray />
    </footer>
  )
}

export default function App() {
  const [page, setPage] = useState('文件管理')

  return (
    <div className="flex min-h-screen flex-col font-['Open_Sans','Noto_Sans_CJK_SC',sans-serif] text-black">
      <TabStrip />
      <Toolbar />
      <div className="flex flex-1">
        <SideMenu current={page} onSelect={setPage} />
        <FileManager />
        <EdgeSidebar />
      </div>
      <Taskbar />
    </div>
  )
}
